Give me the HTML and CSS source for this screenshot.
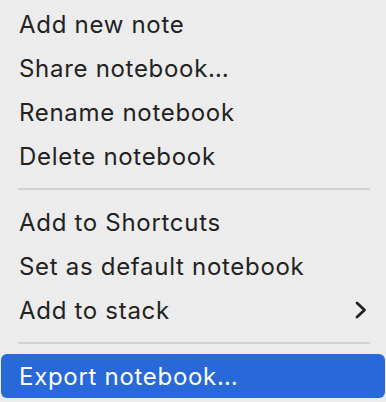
FILE: index.html
```html
<!DOCTYPE html>
<html lang="en">
<head>
  <meta charset="UTF-8" />
  <meta name="viewport" content="width=device-width, initial-scale=1" />
  <title>Notebook menu</title>
  <link rel="stylesheet" href="styles.css">
</head>
<body>
  <ul class="menu" role="menu" aria-label="Notebook actions">
    <li class="menu-item" role="menuitem">Add new note</li>
    <li class="menu-item" role="menuitem">Share notebook…</li>
    <li class="menu-item" role="menuitem">Rename notebook</li>
    <li class="menu-item" role="menuitem">Delete notebook</li>
    <li class="menu-sep" role="separator"></li>
    <li class="menu-item" role="menuitem">Add to Shortcuts</li>
    <li class="menu-item" role="menuitem">Set as default notebook</li>
    <li class="menu-item has-sub" role="menuitem">
      <span>Add to stack</span>
      <svg class="chevron" width="12" height="18" viewBox="0 0 12 18" aria-hidden="true">
        <path d="M2 2 L9.5 9 L2 16" fill="none" stroke="currentColor" stroke-width="2.8" stroke-linecap="round" stroke-linejoin="round"/>
      </svg>
    </li>
    <li class="menu-sep" role="separator"></li>
    <li class="menu-item active" role="menuitem">Export notebook…</li>
  </ul>
</body>
</html>
```

FILE: styles.css
```css
:root {
  --menu-bg: #ececec;
  --menu-text: #222222;
  --sep-color: #d2d2d2;
  --accent: #2868d8;
}

* {
  box-sizing: border-box;
}

body {
  margin: 0;
  background: var(--menu-bg);
  font-family: Inter, "Liberation Sans", sans-serif;
  color: var(--menu-text);
}

.menu {
  list-style: none;
  margin: 0;
  padding: 2px 1px 0;
}

.menu-item {
  height: 44px;
  display: flex;
  align-items: center;
  justify-content: space-between;
  padding: 0 18px;
  font-size: 24px;
  letter-spacing: 0.7px;
  border-radius: 6px;
}

.menu-item.active {
  background: var(--accent);
  color: #ffffff;
}

.chevron {
  color: var(--menu-text);
}

/* thin rule between groups */
.menu-sep {
  height: 22px;
  display: flex;
  align-items: center;
  padding: 0 15px 0 17px;
}

.menu-sep::before {
  content: "";
  flex: 1;
  height: 2px;
  background: var(--sep-color);
}
```
